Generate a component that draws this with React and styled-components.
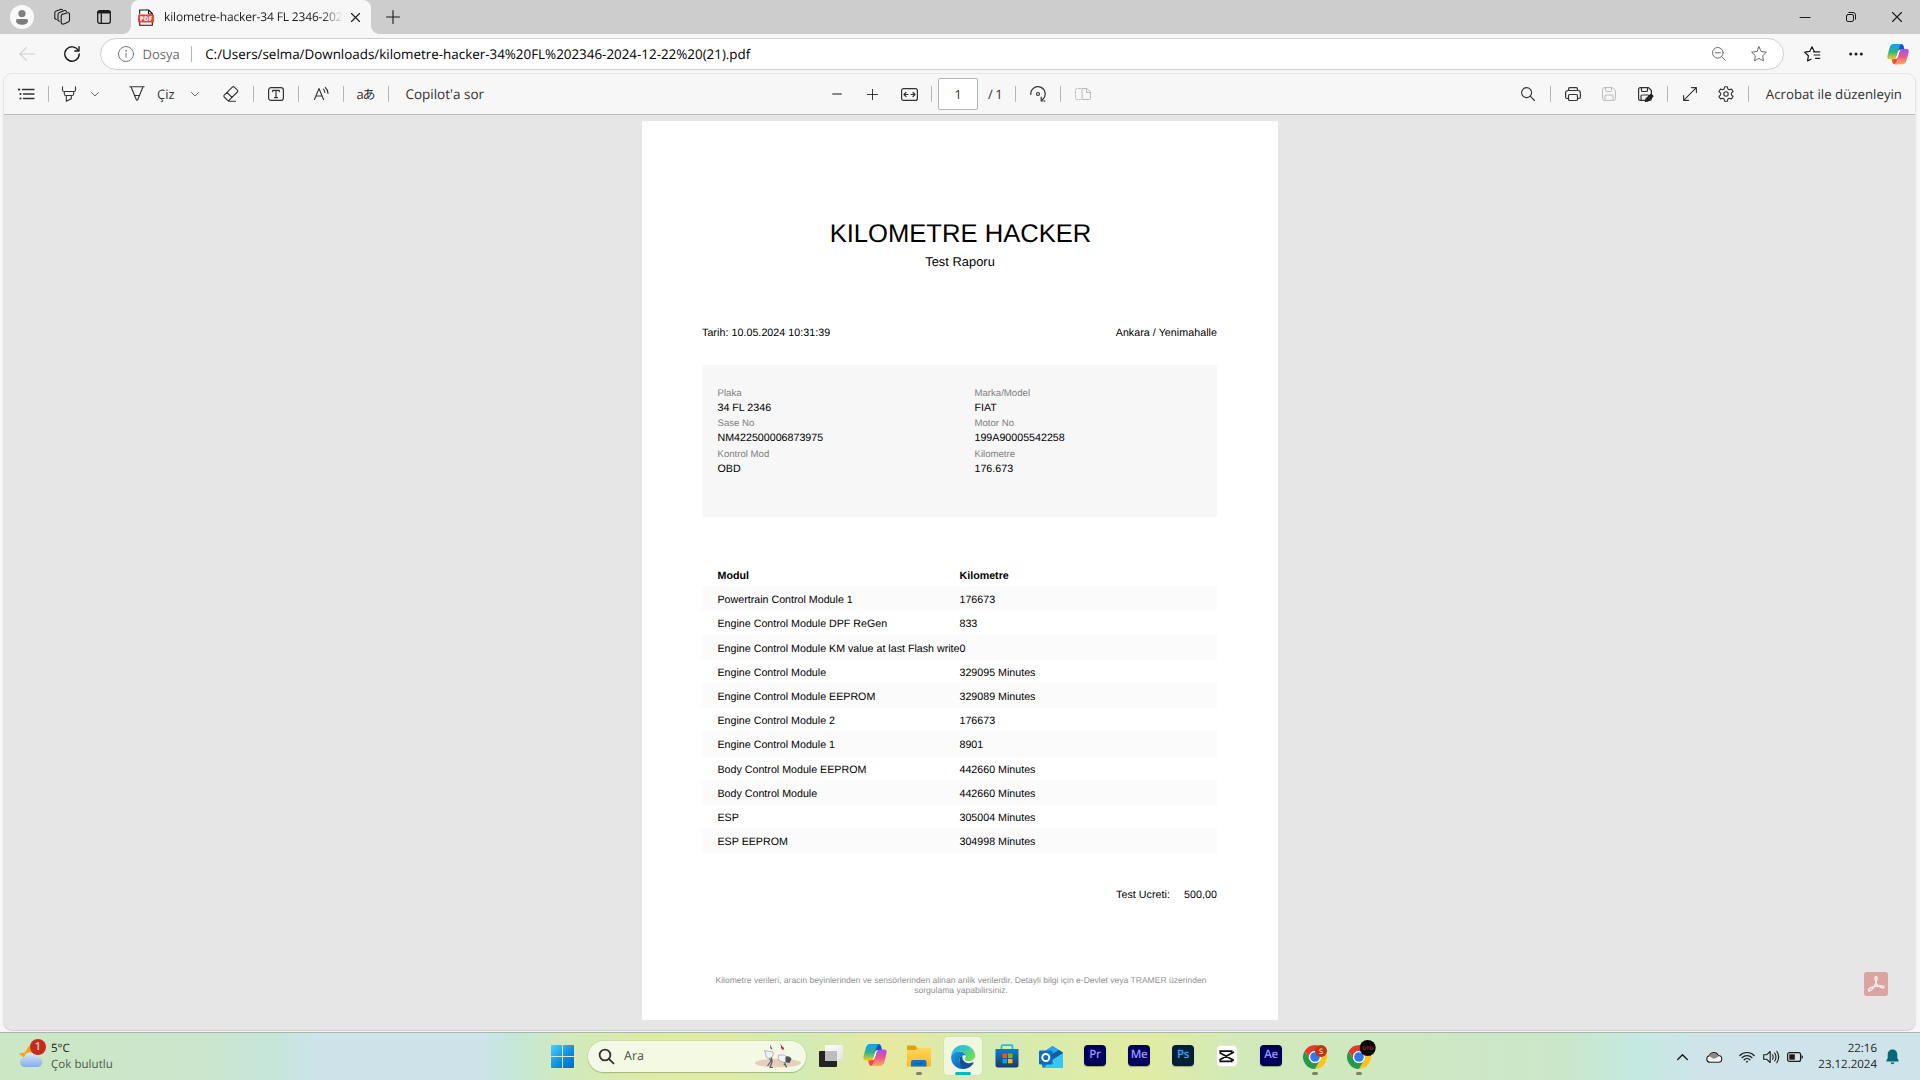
import React from "react";
import styled, { createGlobalStyle } from "styled-components";

const ui = `"Open Sans", "Noto Sans", "Noto Sans CJK JP", sans-serif`;

const Global = createGlobalStyle`
  * { box-sizing: border-box; }
  html, body { margin: 0; padding: 0; }
  body { width: 1920px; height: 1080px; overflow: hidden; font-family: ${ui}; background: #f7f7f7; color: #1b1b1b; text-rendering: geometricPrecision; }
  svg { display: block; flex: none; overflow: visible; }
`;

const Screen = styled.div`display: flex; flex-direction: column; width: 1920px; height: 1080px; background: #f7f7f7;`;

const Label = styled.span`
  white-space: nowrap; flex: none;
  font-size: ${p => p.$size || 13}px;
  line-height: ${p => p.$lh || 18}px;
  letter-spacing: ${p => p.$ls || 0}px;
  color: ${p => p.$color || "#1b1b1b"};
  margin-left: ${p => p.$ml || 0}px;
`;

/* ---------- tab strip ---------- */
const TabStrip = styled.div`height: 34px; background: #cdcdcd; display: flex; align-items: center;`;
const Avatar = styled.div`width: 24px; height: 24px; margin-left: 10px; border-radius: 50%; background: #f9f9f9; display: flex; align-items: center; justify-content: center;`;
const StripIcon = styled.div`margin-left: ${p => p.$ml}px; flex: none;`;
const Tab = styled.div`
  position: relative; margin-left: 20px; width: 240px; height: 34px; padding-left: 7px;
  display: flex; align-items: center; background: #f7f7f7; border-radius: 8px 8px 0 0;
  &::before, &::after { content: ""; position: absolute; bottom: 0; width: 8px; height: 8px; }
  &::before { left: -8px; background: radial-gradient(circle at 0 0, transparent 7.5px, #f7f7f7 8px); }
  &::after { right: -8px; background: radial-gradient(circle at 100% 0, transparent 7.5px, #f7f7f7 8px); }
`;
const TabTitle = styled.div`
  width: 179px; margin-left: 10px; overflow: hidden; white-space: nowrap; font-size: 12px; line-height: 18px; color: #1b1b1b;
  letter-spacing: -0.15px;
  mask-image: linear-gradient(90deg, #000 158px, transparent 179px);
`;
const WindowButtons = styled.div`margin-left: auto; display: flex; align-items: center; gap: 36px; padding-right: 18px;`;

/* ---------- address row ---------- */
const NavRow = styled.div`height: 39px; display: flex; align-items: center; padding: 1px 11px 0 19px;`;
const AddressBox = styled.div`
  flex: none; width: 1684px; height: 32px; margin-left: 20px; padding: 0 16px 0 17px; border: 1px solid #cfcfcf; border-radius: 16px; background: #fff;
  display: flex; align-items: center;
`;
const BoxIcons = styled.div`margin-left: auto; display: flex; align-items: center; gap: 25px;`;
const NavIcons = styled.div`flex: 1; display: flex; align-items: center; justify-content: space-between; padding-left: 20px;`;
const Sep = styled.div`flex: none; width: 1px; height: 16px; background: #b5b5b5; margin: 0 ${p => (p.$mr === undefined ? 14 : p.$mr)}px 0 ${p => (p.$mlx === undefined ? 14 : p.$mlx)}px;`;

/* ---------- viewer ---------- */
const Viewer = styled.div`
  flex: none; height: 957px; width: 1913px; margin-left: 3px; border: 1px solid #e6e6e6; border-radius: 9px; overflow: hidden;
  background: #e6e6e6; box-shadow: 0 1px 1px #cfcfcf; display: flex; flex-direction: column;
`;
const Toolbar = styled.div`flex: none; height: 41px; background: #f7f7f7; border-bottom: 1px solid #bdbdbd; display: flex; align-items: center;`;
const ToolsLeft = styled.div`width: 825px; padding-left: 14px; display: flex; align-items: center;`;
const ToolsCenter = styled.div`flex: 1; display: flex; align-items: center;`;
const ToolsRight = styled.div`display: flex; align-items: center; padding-right: 13px;`;
const Tool = styled.div`flex: none; margin-left: ${p => p.$ml || 0}px;`;
const PageInput = styled.div`width: 40px; height: 32px; border: 1px solid #b4b4b4; border-radius: 2px; background: #fff; display: flex; align-items: center; justify-content: center; font-size: 12.5px; color: #333;`;
const Canvas = styled.div`position: relative; flex: 1; display: flex; justify-content: center; padding: 6px 0 0 1px;`;
const AcrobatBadge = styled.div`position: absolute; right: 27px; bottom: 33px; width: 24px; height: 24px; border-radius: 3px; background: #d9a4a1;`;

/* ---------- pdf page ---------- */
const Page = styled.div`
  width: 636px; height: 899px; background: #fff; color: #000; padding: 98px 61px 0 60px; font-family: "Liberation Sans", Arial, sans-serif;
  display: flex; flex-direction: column; font-size: 10.68px;
`;
const Title = styled.div`text-align: center; font-size: 25.6px; line-height: 30px; white-space: nowrap; padding-left: 2px;`;
const Subtitle = styled.div`text-align: center; font-size: 12.82px; line-height: 16px; margin-top: 5px; padding-left: 1px; letter-spacing: 0.05px;`;
const MetaRow = styled.div`margin-top: 55px; display: flex; justify-content: space-between; line-height: 16px; letter-spacing: 0.05px;`;
const InfoBox = styled.div`
  margin-top: 24px; height: 152px; background: #f7f7f7; padding: 21px 0 0 15.5px;
  display: grid; grid-template-columns: 257px 1fr; grid-template-rows: 30px 31px 30px;
`;
const FieldName = styled.div`font-size: 9.62px; line-height: 15px; color: #808080;`;
const FieldValue = styled.div`line-height: 15px;`;
const Table = styled.div`margin-top: 44px; display: flex; flex-direction: column;`;
const Row = styled.div`
  height: ${p => p.$h || 24}px; padding: ${p => (p.$head ? 7 : 6)}px 0 0 15.5px; display: grid; grid-template-columns: 242px 1fr; line-height: 16px; white-space: nowrap;
  font-weight: ${p => (p.$head ? 700 : 400)};
  background: ${p => (p.$striped ? "#fbfbfb" : "transparent")};
  box-shadow: ${p => (p.$striped ? "0 1px 0 #fcfcfc" : "none")};
`;
const Fee = styled.div`margin-top: 35px; line-height: 16px; display: flex; justify-content: flex-end; gap: 14px; letter-spacing: 0.05px;`;
const Footnote = styled.div`margin-top: 72px; font-size: 8.55px; line-height: 10px; color: #8f8f8f; text-align: center; padding-left: 3px;`;

/* ---------- taskbar ---------- */
const Taskbar = styled.div`
  height: 48px; margin-top: auto; border-top: 1px solid #a9b5ad; display: flex; align-items: center; position: relative;
  background: linear-gradient(90deg, #cbe7c3 0, #cbe6cd 200px, #c6e6dc 280px, #cde3e9 320px, #cde3e9 480px, #c5e7dc 510px, #d0e9be 560px, #deeba6 650px, #e0eca4 720px, #d3ebb4 800px, #e7e9a0 890px, #d5ebb2 985px, #e1eca2 1140px, #d2e9b9 1240px, #cfe8c2 1400px, #cbe7ca 1560px, #c4e9e2 1640px, #cfe3e9 1700px, #cfe3ea 1920px);
`;
const Weather = styled.div`width: 588px; padding-left: 19px; display: flex; align-items: center; gap: 8px;`;
const WeatherIcon = styled.div`position: relative; width: 24px; height: 30px;`;
const CountBadge = styled.div`position: absolute; left: 11px; top: -3px; width: 16px; height: 16px; border-radius: 50%; background: #c42b1c; color: #fff; font-size: 11px; line-height: 16px; text-align: center;`;
const Lines = styled.div`display: flex; flex-direction: column; align-items: ${p => p.$align || "flex-start"};`;
const StartButton = styled.div`margin-left: -37px; margin-right: 14px;`;
const SearchPill = styled.div`width: 218px; height: 31px; margin-bottom: 1px; border-radius: 16px; background: rgba(250,252,245,.78); box-shadow: 0 1px 1px rgba(90,110,60,.35), 0 0 0 1px rgba(120,140,90,.12); display: flex; align-items: center; padding: 0 4px 0 11px;`;
const Apps = styled.div`display: flex; margin-left: 3px;`;
const AppSlot = styled.div`
  position: relative; width: 44px; height: 47px; padding-bottom: ${p => (p.$lift ? 2 : 0)}px; display: flex; align-items: center; justify-content: center;
  &::before { content: ""; position: absolute; left: 3px; top: 4px; width: 38px; height: 38px; border-radius: 4px; background: ${p => (p.$active ? "rgba(255,255,255,.6)" : "transparent")}; box-shadow: ${p => (p.$active ? "0 0 1px rgba(0,0,0,.25)" : "none")}; }
  &::after { content: ""; position: absolute; bottom: 5px; width: ${p => (p.$active ? 16 : 6)}px; height: 3px; border-radius: 2px; background: ${p => (p.$active ? "#00b7c7" : p.$open ? "#7c8467" : "transparent")}; }
  svg { position: relative; }
`;
const AdobeTile = styled.div`
  width: 22px; height: 21px; border-radius: 4px; background: ${p => p.$bg}; color: ${p => p.$fg}; font-size: 11.5px; font-weight: 600; line-height: 20px; text-align: center; letter-spacing: -0.3px; box-shadow: 0 1px 1px rgba(0,0,0,.3);
`;
const Tray = styled.div`margin-left: auto; display: flex; align-items: center; padding-right: 21px;`;

const Stroke = ({ w = 16, h = 16, vb, c = "#1b1b1b", sw = 1, children }) => (
  <svg width={w} height={h} viewBox={vb || `0 0 ${w} ${h}`} fill="none" stroke={c} strokeWidth={sw} strokeLinecap="round" strokeLinejoin="round">{children}</svg>
);

const PersonIcon = () => <svg width="12" height="15" viewBox="0 0 12 15" fill="#7d7d7d"><circle cx="6" cy="3.6" r="3.6" /><path d="M1.500 9h9Q12 9 12 10.500C12 13.500 9 14.800 6 14.800S0 13.500 0 10.500Q0 9 1.500 9Z" /></svg>;
const WorkspacesIcon = () => <Stroke sw={1.1}><path d="M8 5.500 13.500 3.800Q15.500 3.500 15.500 5v6q0 1.500-1.300 2l-3.700 1.700Q8 15.800 7.200 14V7Q7.200 5.800 8.500 5.300Z" /><path d="M5.300 12.300 4 11.600V5.400Q4 4 5.500 3.400L10 1.700q1.500-.5 2.500.6" /><path d="M2.300 10.500.8 9.500V3.700Q.8 2.500 2.200 1.900L6.500.4q1.300-.4 2.200.6" /></Stroke>;
const VerticalTabsIcon = () => <Stroke w={14} h={14} sw={1.3}><rect x=".7" y=".7" width="12.600" height="12.600" rx="2" /><path d="M4.300 4v9" /><path d="M1.500 2.200h11" strokeWidth="2.600" /></Stroke>;
const PdfIcon = () => (
  <svg width="16" height="17" viewBox="0 0 16 17"><path d="M1.700 5V1h9l3.600 3.600V16.300H1.700V13" fill="#fff" stroke="#111" strokeWidth="1.100" /><path d="M10.500 1v4h4" fill="none" stroke="#111" strokeWidth="1" /><rect x="0" y="5.500" width="16" height="8" rx="1" fill="#fb3a37" /><text x="8" y="11.900" textAnchor="middle" fontSize="6.500" fontWeight="800" fill="#fff" fontFamily="Open Sans">PDF</text></svg>
);
const Cross = ({ s = 9, sw = 1.1 }) => <Stroke w={s} h={s} sw={sw}><path d={`M.5 .5 ${s - .5} ${s - .5}M${s - .5} .5 .5 ${s - .5}`} /></Stroke>;
const Plus = ({ s = 14, ...r }) => <Stroke w={s} h={s} vb="0 0 14 14" sw={1.1} {...r}><path d="M7 .5v13M.5 7h13" /></Stroke>;
const BackIcon = () => <Stroke w={16} h={14} c="#cfcfcf" sw={1.1}><path d="M15.500 7H1M7.300.700 1 7l6.300 6.300" /></Stroke>;
const ReloadIcon = () => <Stroke sw={1.4}><path d="M14.300 4.500A7.200 7.200 0 1 0 15.200 8" /><path d="M15 .800V5h-4.200" /></Stroke>;
const InfoIcon = () => <Stroke c="#767676"><circle cx="8" cy="8" r="7.500" /><path d="M8 7.300v4" /><circle cx="8" cy="4.800" r=".4" fill="#767676" /></Stroke>;
const ZoomOutIcon = () => <Stroke w={14} h={14} c="#6a6a6a"><circle cx="5.800" cy="5.800" r="5.300" /><path d="M9.700 9.700 13.500 13.500M3.300 5.800h5" /></Stroke>;
const StarIcon = () => <Stroke c="#6a6a6a"><path d="M8 .8l2.200 4.700 5.200.700-3.800 3.600.900 5.100L8 12.400 3.500 14.900l.900-5.100L.600 6.200l5.200-.700Z" /></Stroke>;
const FavoritesIcon = () => <Stroke sw={1.2}><path d="M10.300 5.400 8 .800 5.700 5.400l-5 .8 3.700 3.600-.9 5.100L7 13.200" /><path d="M9.500 5.800h6.300M10 9h5.800M11.500 12.300h4.300" /></Stroke>;
const DotsIcon = () => <svg width="14" height="4" viewBox="0 0 14 4" fill="#1b1b1b"><circle cx="1.700" cy="2" r="1.500" /><circle cx="7" cy="2" r="1.500" /><circle cx="12.300" cy="2" r="1.500" /></svg>;
const CopilotIcon = ({ s = 22, id }) => (
  <svg width={s} height={s * .92} viewBox="0 0 24 22">
    <defs>
      <linearGradient id={id + "a"} x1="0" y1="0" x2="0" y2="1"><stop offset="0" stopColor="#1d9bf5" /><stop offset=".5" stopColor="#2bb38b" /><stop offset="1" stopColor="#f0cf22" /></linearGradient>
      <linearGradient id={id + "b"} x1="0" y1="0" x2="0" y2="1"><stop offset="0" stopColor="#a64df0" /><stop offset=".5" stopColor="#ee5590" /><stop offset="1" stopColor="#ffab5c" /></linearGradient>
    </defs>
    <path d="M12 0h3.500q2 0 2.600 2.200L19 6h-3.500q-3 0-3.800 2.500Z" fill="#1550c8" />
    <path d="M12 22H8.500q-2 0-2.600-2.200L5 16h3.500q3 0 3.800-2.500Z" fill="#ef5036" />
    <path d="M7 0h9.200q-1.800.5-2.500 3L10.500 13.500Q9.600 16.500 6.800 16.500H3q-3.500 0-2.500-4L2.800 4Q3.900 0 7 0Z" fill={`url(#${id}a)`} />
    <path d="M17 22H7.800q1.800-.5 2.500-3L13.500 8.500q.900-3 3.700-3H21q3.500 0 2.500 4L21.200 18q-1.100 4-4.200 4Z" fill={`url(#${id}b)`} />
    <path d="M12.200 8.500q.6-2.200 2.600-2.800-1 1-1.400 2.600L11.800 13.500q-.6 2.200-2.600 2.700 1-1 1.400-2.500Z" fill="#fff" opacity=".85" />
  </svg>
);

const ListIcon = () => <Stroke w={16} h={12} c="#333" sw={1.3}><path d="M4.500 1.500H16M5.500 6H16M5.500 10.500H16" /><path d="M.8 1.500h.6M2.300 6h.3M2.300 10.500h.3" strokeWidth="1.800" /></Stroke>;
const HighlighterIcon = () => <Stroke c="#333" sw={1.1}><path d="M1.500.800V4q0 1.500 1.500 1.500h10q1.500 0 1.500-1.500V.800M3.300 5.500V8q0 1.500 1.500 1.500h6.400q1.500 0 1.500-1.500V5.500M5.300 9.500v5.700l5-2.500V9.500" /></Stroke>;
const ChevronDown = () => <Stroke w={8} h={5} c="#666"><path d="M.5.500 4 4 7.500.500" /></Stroke>;
const PenIcon = () => <Stroke c="#333" sw={1.1}><path d="M.8.800h14.400M2 .800 7 13q1 2.500 2 0L14 .800M5.300 9.500h5.400" /></Stroke>;
const EraserIcon = () => <Stroke c="#333" sw={1.1}><path d="M9.300 1.100 1.200 9.200q-.9.900 0 1.800l3.200 3.200q.9.900 1.800 0l8.200-8.200q.9-.9 0-1.800l-3.200-3.100q-.900-.9-1.900 0ZM4 6.400l5.100 5.100M5.500 15.200h7" /></Stroke>;
const TextBoxIcon = () => <Stroke h={14} c="#333" sw={1.2}><rect x=".6" y=".6" width="14.800" height="12.800" rx="2.500" /><path d="M4.700 4.700V3.300h6.600v1.400M8 3.300v7.400M6.500 10.700h3" /></Stroke>;
const ReadAloudIcon = () => <Stroke c="#333" sw={1.1}><path d="M1.500 13.500 6 2.500l4.500 11M3 10h6M10.300 3.200q1.500 1.300 1.500 3.300M12.300 1.500q2.700 2.200 2.700 6" /></Stroke>;
const MinusIcon = () => <Stroke w={10} h={2} c="#868686" sw={2}><path d="M1 1h8" /></Stroke>;
const FitIcon = () => <Stroke h={13} w={17} c="#333" sw={1.2}><rect x=".6" y=".6" width="15.800" height="11.800" rx="2" /><path d="M3 6.500h4M10 6.500h4M5 4.500l-2 2 2 2M12 4.500l2 2-2 2" /></Stroke>;
const RotateIcon = () => <Stroke w={16} h={16} c="#333" sw={1.2}><path d="M.8 8.500a7.200 7.200 0 1 1 11.500 5.200" /><path d="M15 15h-3.800v-4" /><circle cx="8" cy="8" r="1.500" /></Stroke>;
const PageViewIcon = () => <Stroke w={16} h={12} c="#b9b9b9"><path d="M7.500.500h4.500l3.500 3.500v6.500q0 1-1 1H7.500ZM11.500.500v4h4" /><path d="M5.500.500H2Q.5.500.5 2v8q0 1.500 1.500 1.500h3.500" strokeDasharray="2 1.600" /></Stroke>;
const SearchIcon = ({ s = 14, c = "#333", sw = 1.1 }) => <Stroke w={s} h={s} vb="0 0 14 14" c={c} sw={sw}><circle cx="5.600" cy="5.600" r="5" /><path d="M9.200 9.200 13.500 13.500" /></Stroke>;
const PrinterIcon = () => <Stroke h={14} c="#333" sw={1.2}><path d="M3.500 3.500V2q0-1.400 1.400-1.400h6.200Q12.500.6 12.500 2v1.500M3.500 11.500H2Q.6 11.500.6 10V6q0-2.500 2.500-2.500h9.800Q15.400 3.500 15.400 6v4q0 1.500-1.400 1.500h-1.500" /><rect x="3.500" y="7.500" width="9" height="6" rx="1.200" /></Stroke>;
const SavePath = "M2.500.6H10.500L13.400 3.500V11.500Q13.400 13.400 11.500 13.400H2.500Q.6 13.400.6 11.500V2.500Q.6.6 2.500.6ZM3.500.6V3.500Q3.500 4.500 4.500 4.500H8.500Q9.500 4.500 9.500 3.500V.6M3 13.400V9Q3 8 4 8H10Q11 8 11 9V13.400";
const SaveIcon = () => <Stroke w={14} h={14} c="#b9b9b9"><path d={SavePath} /></Stroke>;
const SaveAsIcon = () => <Stroke w={16} h={15} c="#333" sw={1.2}><path d={SavePath} /><path d="M7.500 14.500l.6-2.800L13 7.200l2 2-4.800 4.700Z" fill="#222" stroke="#222" strokeWidth="1.200" /></Stroke>;
const ExpandIcon = () => <Stroke w={14} h={14} c="#333" sw={1.1}><path d="M.6 13.400 13.400.6M8.500.6h4.900v4.900M.6 8.500v4.900h4.900" /></Stroke>;
const GearIcon = () => <Stroke w={16} h={16} c="#333" sw={1.1}><circle cx="8" cy="8" r="2.200" /><path d="M6.600.8h2.800l.5 2.300 1.300.7 2.300-.7 1.600 2.400-1.700 1.700v1.600l1.700 1.700-1.600 2.400-2.300-.7-1.300.7-.5 2.300H6.600l-.5-2.300-1.300-.7-2.300.7-1.600-2.400 1.700-1.700V7.200L.9 5.500l1.600-2.400 2.300.7 1.300-.7Z" /></Stroke>;
const AcrobatMark = () => <Stroke w={24} h={24} c="#fdf3f2" sw={1.3}><path d="M12 4.300c1.600 0 1.100 3.900 0 6.700-1.300 3.300-4.300 7.900-6.500 8-1.700 0-1.300-2 1.200-3.300 3.600-1.900 13.200-3 13.300-.5 0 1.800-4.500.4-6.700-2.300C11.300 10.600 10.300 4.300 12 4.300Z" /></Stroke>;

const PartlyCloudy = () => (
  <svg width="24" height="28" viewBox="0 0 24 28"><defs><linearGradient id="cl" x1="0" y1="0" x2="0" y2="1"><stop offset="0" stopColor="#dce9fb" /><stop offset="1" stopColor="#84aceb" /></linearGradient></defs>
    <path d="M10.500 3 12 8l5 0-2 10H6l-1-2-5-4.500 6-1 .5-1Z" fill="#f7a11b" /><path d="M5.500 25a5.300 5 0 0 1-.5-9.800A6.500 6.500 0 0 1 17.500 15 5 5 0 0 1 19 25Z" fill="url(#cl)" /></svg>
);
const WindowsLogo = () => (
  <svg width="23" height="23" viewBox="0 0 23 23"><defs><linearGradient id="wn" gradientUnits="userSpaceOnUse" x1="0" y1="0" x2="23" y2="23"><stop offset="0" stopColor="#4fd0fb" /><stop offset=".55" stopColor="#0f8ee0" /><stop offset="1" stopColor="#0067c5" /></linearGradient></defs>
    <path d="M1 0h10v11H0V1Q0 0 1 0ZM12 0h10q1 0 1 1v10H12ZM0 12h11v11H1q-1 0-1-1ZM12 12h11v10q0 1-1 1H12Z" fill="url(#wn)" /></svg>
);
const Cranes = () => (
  <svg width="46" height="24" viewBox="0 0 46 24"><ellipse cx="23" cy="19" rx="23" ry="4.300" fill="#e8cdb9" />
    <g fill="none" stroke="#555a66" strokeWidth="1.200" strokeLinejoin="round"><path d="M14 13l2 4-3.500 5M16.500 13l.5 5-2 5.500h3M29 17l2.500 6.500M31 17l-2 4" /></g>
    <g fill="none" stroke="#eef0f5" strokeWidth="2.200" strokeLinecap="round"><path d="M16 2.500q2.500 3 .5 7M27 3q3 4 0 9" /></g>
    <path d="M9.500 6.500q4 1 8.500 1.500 1 5-4 6.500-4-1-3-3.500Z" fill="#f1f3f7" stroke="#8a8f9b" strokeWidth=".6" /><path d="M23.500 11q5-1 9 2l2 5q-7 2-11.500-3Z" fill="#f1f3f7" stroke="#8a8f9b" strokeWidth=".6" /><path d="M30.500 13q4-2 6 2l-2 4-4-1Z" fill="#4a4f5c" /><path d="M15 .500l2.500 5-2-1ZM25.500 0l2.800 4-2 .5Z" fill="#474b57" /><circle cx="27.800" cy="4.500" r="1.200" fill="#d3293d" /></svg>
);
const TaskViewIcon = () => (
  <svg width="24" height="22" viewBox="0 0 24 22"><defs><linearGradient id="tv" x1="0" y1="0" x2="1" y2="1"><stop offset="0" stopColor="#fff" /><stop offset="1" stopColor="#e2e2e2" /></linearGradient></defs><rect y="6" width="18" height="16" rx="1" fill="#242424" /><rect x="6" width="18" height="16" rx="1" fill="url(#tv)" /><rect x="6" y="6" width="12" height="10" fill="#bdbdbd" /></svg>
);
const FolderIcon = () => (
  <svg width="24" height="22" viewBox="0 0 24 22"><defs><linearGradient id="fo" x1="0" y1="0" x2="0" y2="1"><stop offset="0" stopColor="#ffd75e" /><stop offset="1" stopColor="#fbb91c" /></linearGradient></defs><path d="M0 1.500Q0 .500 1 .500h7L10.500 3H23q1 0 1 1v5H0Z" fill="#e0a010" /><path d="M0 5h8.500L11 3h12q1 0 1 1v16.500q0 1-1 1H1q-1 0-1-1Z" fill="url(#fo)" /><path d="M4 21.500V17q0-2 2-2h11.500q2 0 2 2v4.500Z" fill="#0e73c9" /><rect x="8" y="18" width="8" height="1.300" fill="#0a5aa8" /></svg>
);
const EdgeIcon = () => (
  <svg width="24" height="24" viewBox="0 0 24 24"><defs>
    <linearGradient id="e1" x1="0" y1="0" x2="1" y2=".6"><stop offset="0" stopColor="#2fb4e8" /><stop offset=".5" stopColor="#31c7c5" /><stop offset="1" stopColor="#6ee04a" /></linearGradient>
    <linearGradient id="e2" x1="0" y1="0" x2="1" y2="1"><stop offset="0" stopColor="#1b9de2" /><stop offset="1" stopColor="#0b5aad" /></linearGradient></defs>
    <path d="M.2 11C.9 4.500 6 0 12 0c7 0 12 5 12 10 0 4-2.700 6.200-6.200 6.200-3 0-4.200-1-4.200-2 0-.8 1-1.200 1-3.200 0-2.500-2.500-4.500-6-4.500C4 6.500 1 9 .2 11Z" fill="url(#e1)" />
    <path d="M.1 11.500C1 8.500 4.500 6.300 8.500 6.500c3.500.2 6 2 6.100 4.300C13 9.500 8.500 11 8.500 15.500c0 4 3.500 7.500 7 8C7 26-.5 19.500.100 11.500Z" fill="url(#e2)" />
    <path d="M8.500 15.500c0-2.500 1.300-4.300 3-5.200-1.200 4.500 2.500 8.200 7 7.900 1.500-.1 2.800-.5 3.500-.9.600-.3.900.2.600.7C21 21 17.500 23.800 14 23.500 10.500 23 8.500 19 8.500 15.500Z" fill="#10509c" /></svg>
);
const StoreIcon = () => (
  <svg width="24" height="24" viewBox="0 0 24 24"><defs><linearGradient id="st" x1="0" y1="0" x2="0" y2="1"><stop offset="0" stopColor="#0f7cc8" /><stop offset="1" stopColor="#173b69" /></linearGradient></defs><path d="M6.500 6V2.500Q6.500 1.200 7.800 1.200h8.400q1.300 0 1.300 1.300V6" fill="none" stroke="#26b8f0" strokeWidth="1.800" /><path d="M.5 5h23v16q0 2.500-2.500 2.500H3Q.5 23.500.5 21Z" fill="url(#st)" /><path d="M7.500 9.500H12V14H7.500Z" fill="#f25022" /><path d="M13 9.500h4.500V14H13Z" fill="#7fba00" /><path d="M7.500 15H12v4.300H7.500Z" fill="#00a4ef" /><path d="M13 15h4.500v4.300H13Z" fill="#ffb900" /></svg>
);
const OutlookIcon = () => (
  <svg width="24" height="22" viewBox="0 0 24 22"><path d="M3 7 13.500 0 24 6.500V20q0 2-2 2H5q-2 0-2-2Z" fill="#1583d8" /><path d="M7 4.500 13.500.500l6 3.500L9 11Z" fill="#28a8ea" /><path d="M12 13 24 7V20q0 2-2 2H5Z" fill="#35c6f4" /><path d="M11 9.500 20 4l4 3-11 7Z" fill="#0f5ba7" /><rect y="4.500" width="13.500" height="14" rx="1.300" fill="#0f6cbd" /><circle cx="6.800" cy="11.500" r="3.500" fill="none" stroke="#fff" strokeWidth="1.900" /></svg>
);
const CapCutIcon = () => <svg width="22" height="22" viewBox="0 0 22 22"><rect x=".8" y=".5" width="20.400" height="21" rx="4" fill="#fff" stroke="#d8ddc8" strokeWidth=".5" /><path d="M18 7 4.200 14.500V16.300h11.500v-2.500M18 15.500 4.200 8V6.200h11.500v2.500" fill="none" stroke="#111" strokeWidth="1.700" /></svg>;
const ChromeIcon = ({ second }) => (
  <svg width="24" height="24" viewBox="0 0 24 24">
    <circle cx="12" cy="12" r="12" fill="#fff" /><path d="M1.600 6A12 12 0 0 1 22.400 6H12a6 6 0 0 0-5.200 9Z" fill="#e33b2e" /><path d="M22.400 6A12 12 0 0 1 12 24l5.200-9A6 6 0 0 0 12 6Z" fill="#fcc31e" /><path d="M12 24A12 12 0 0 1 1.600 6l5.200 9A6 6 0 0 0 17.200 15Z" fill="#27994a" /><circle cx="12" cy="12" r="6" fill="#fff" /><circle cx="12" cy="12" r="4.800" fill="#2f78ee" />
    {second ? <g><circle cx="20.700" cy="3" r="8" fill="#050505" /><text x="20.700" y="4.800" textAnchor="middle" fontSize="5" fontWeight="700" fill="#b3202a" fontFamily="Open Sans">OTO</text></g> : <g><circle cx="18" cy="6" r="6" fill="#bf360c" /><text x="18" y="8.700" textAnchor="middle" fontSize="7.500" fill="#fff" fontFamily="Open Sans">S</text></g>}
  </svg>
);
const ChevronUp = () => <Stroke w={11} h={6} sw={1.4}><path d="M.7 5.500 5.500.700l4.800 4.800" /></Stroke>;
const OneDriveIcon = () => <svg width="16" height="12" viewBox="0 0 16 12"><path d="M4 11.300a3.300 3.300 0 0 1-.7-6.500A4.800 4.800 0 0 1 12.200 4.500a3.400 3.400 0 0 1 .3 6.800Z" fill="#f4f4f4" stroke="#222" strokeWidth="1.100" /><path d="M3.200 5.300a4.600 4.600 0 0 1 8.500-.8L13 5.200 8 8Z" fill="#8b8b8b" /></svg>;
const WifiIcon = () => <Stroke w={16} h={12} sw={1.2}><path d="M.8 4.500a10.200 10.200 0 0 1 14.400 0M3 6.700a7.100 7.100 0 0 1 10 0M5.200 8.800a4 4 0 0 1 5.600 0" /><circle cx="8" cy="10.700" r=".9" fill="#1b1b1b" stroke="none" /></Stroke>;
const SoundIcon = () => <Stroke w={17} h={14} sw={1.1}><path d="M.7 4.800h2.800L7.200 1.500v11L3.500 9.200H.7ZM9.500 4.800q1.300 2.200 0 4.400M11.700 3q2.500 4 0 8M13.800 1.300q3.700 5.700 0 11.400" /></Stroke>;
const BatteryIcon = () => <svg width="16" height="10" viewBox="0 0 16 10"><rect x=".6" y=".6" width="13" height="8.800" rx="2" fill="none" stroke="#1b1b1b" strokeWidth="1.200" /><rect x="2.300" y="2.300" width="5.500" height="5.400" fill="#1b1b1b" /><path d="M14.500 3.300q1.500 0 1.500 1.700t-1.500 1.700Z" fill="#1b1b1b" /></svg>;
const BellIcon = () => <svg width="13" height="16" viewBox="0 0 13 16" fill="#00697a"><path d="M6.500.500C3.500.500 1.700 2.600 1.700 5.500v3.500L.3 11.800q-.2.700.5.700h11.400q.7 0 .5-.7L11.300 9V5.500C11.300 2.600 9.500.500 6.500.500ZM4.500 13.500h4q-.3 1.700-2 1.700t-2-1.700Z" /></svg>;

const fields = [
  ["Plaka", "34 FL 2346"], ["Marka/Model", "FIAT"],
  ["Sase No", "NM422500006873975"], ["Motor No", "199A90005542258"],
  ["Kontrol Mod", "OBD"], ["Kilometre", "176.673"],
];
const modules = [
  ["Powertrain Control Module 1", "176673"],
  ["Engine Control Module DPF ReGen", "833", 25],
  ["Engine Control Module KM value at last Flash write", "0"],
  ["Engine Control Module", "329095 Minutes"],
  ["Engine Control Module EEPROM", "329089 Minutes"],
  ["Engine Control Module 2", "176673"],
  ["Engine Control Module 1", "8901", 25],
  ["Body Control Module EEPROM", "442660 Minutes"],
  ["Body Control Module", "442660 Minutes"],
  ["ESP", "305004 Minutes"],
  ["ESP EEPROM", "304998 Minutes"],
];

export default function App() {
  return (
    <Screen>
      <Global />
      <TabStrip>
        <Avatar><PersonIcon /></Avatar>
        <StripIcon $ml={20}><WorkspacesIcon /></StripIcon>
        <StripIcon $ml={27}><VerticalTabsIcon /></StripIcon>
        <Tab>
          <PdfIcon />
          <TabTitle>kilometre-hacker-34 FL 2346-2024</TabTitle>
          <StripIcon $ml={8}><Cross /></StripIcon>
        </Tab>
        <StripIcon $ml={15}><Plus /></StripIcon>
        <WindowButtons>
          <Stroke w={10} h={1} sw={1}><path d="M0 .5h10" /></Stroke>
          <Stroke w={10} h={10}><rect x=".5" y="2.500" width="7" height="7" rx="1.500" /><path d="M2.800.5H7Q9.500.500 9.500 3v4.200" /></Stroke>
          <Cross s={10} />
        </WindowButtons>
      </TabStrip>

      <NavRow>
        <BackIcon />
        <StripIcon $ml={29}><ReloadIcon /></StripIcon>
        <AddressBox>
          <InfoIcon />
          <Label $ml={8.5} $size={13} $color="#6b6b6b">Dosya</Label>
          <Sep $mlx={11.5} $mr={13} />
          <Label $size={13.4} $color="#000">C:/Users/selma/Downloads/kilometre-hacker-34%20FL%202346-2024-12-22%20(21).pdf</Label>
          <BoxIcons><ZoomOutIcon /><StarIcon /></BoxIcons>
        </AddressBox>
        <NavIcons><FavoritesIcon /><Tool $ml={5}><DotsIcon /></Tool><CopilotIcon id="n" /></NavIcons>
      </NavRow>

      <Viewer>
        <Toolbar>
          <ToolsLeft>
            <ListIcon /><Sep $mr={12} /><HighlighterIcon />
            <Tool $ml={14}><ChevronDown /></Tool>
            <Tool $ml={30}><PenIcon /></Tool>
            <Label $ml={12} $color="#333">Çiz</Label>
            <Tool $ml={16}><ChevronDown /></Tool>
            <Tool $ml={24}><EraserIcon /></Tool>
            <Sep /><TextBoxIcon /><Sep /><ReadAloudIcon /><Sep $mr={13} />
            <Label $size={13} $ls={-1.2} $color="#333">aあ</Label>
            <Sep $mlx={14} $mr={16} />
            <Label $size={13.5} $color="#333">Copilot'a sor</Label>
          </ToolsLeft>
          <ToolsCenter>
            <Tool $ml={3}><MinusIcon /></Tool>
            <Tool $ml={25}><Plus s={11} /></Tool>
            <Tool $ml={23}><FitIcon /></Tool>
            <Sep $mlx={13} $mr={6} />
            <PageInput>1</PageInput>
            <Label $ml={10} $ls={-0.4} $color="#333">/ 1</Label>
            <Sep $mlx={12.5} /><RotateIcon /><Sep /><PageViewIcon />
          </ToolsCenter>
          <ToolsRight>
            <SearchIcon /><Sep $mlx={15} /><PrinterIcon />
            <Tool $ml={21}><SaveIcon /></Tool>
            <Tool $ml={22}><SaveAsIcon /></Tool>
            <Sep $mlx={13} $mr={15} /><ExpandIcon />
            <Tool $ml={21}><GearIcon /></Tool>
            <Sep $mr={17} />
            <Label $size={13.25} $color="#333">Acrobat ile düzenleyin</Label>
          </ToolsRight>
        </Toolbar>
        <Canvas>
          <Page>
            <Title>KILOMETRE HACKER</Title>
            <Subtitle>Test Raporu</Subtitle>
            <MetaRow><span>Tarih: 10.05.2024 10:31:39</span><span>Ankara / Yenimahalle</span></MetaRow>
            <InfoBox>
              {fields.map(([k, v]) => <div key={k}><FieldName>{k}</FieldName><FieldValue>{v}</FieldValue></div>)}
            </InfoBox>
            <Table>
              <Row $head $h={25}><span>Modul</span><span>Kilometre</span></Row>
              {modules.map(([m, k, h], i) => <Row key={m} $h={h} $striped={i % 2 === 0}><span>{m}</span><span>{k}</span></Row>)}
            </Table>
            <Fee><span>Test Ucreti:</span><span>500,00</span></Fee>
            <Footnote>Kilometre verileri, aracin beyinlerinden ve sensörlerinden alinan anlik verilerdir. Detayli bilgi için e-Devlet veya TRAMER üzerinden sorgulama yapabilirsiniz.</Footnote>
          </Page>
          <AcrobatBadge><AcrobatMark /></AcrobatBadge>
        </Canvas>
      </Viewer>

      <Taskbar>
        <Weather>
          <WeatherIcon><PartlyCloudy /><CountBadge>1</CountBadge></WeatherIcon>
          <Lines>
            <Label $size={11.5} $lh={16}>5°C</Label>
            <Label $size={11.5} $lh={16} $ls={0.05} $color="#4c5a4d">Çok bulutlu</Label>
          </Lines>
        </Weather>
        <StartButton><WindowsLogo /></StartButton>
        <SearchPill>
          <SearchIcon s={15} sw={1.7} />
          <Label $ml={10} $size={12.5} $color="#4f5548">Ara</Label>
          <Tool $ml={111}><Cranes /></Tool>
        </SearchPill>
        <Apps>
          <AppSlot $lift><TaskViewIcon /></AppSlot>
          <AppSlot $lift><CopilotIcon s={24} id="t" /></AppSlot>
          <AppSlot $lift $open><FolderIcon /></AppSlot>
          <AppSlot $active><EdgeIcon /></AppSlot>
          <AppSlot $lift><StoreIcon /></AppSlot>
          <AppSlot><OutlookIcon /></AppSlot>
          <AppSlot $lift><AdobeTile $bg="#00005b" $fg="#9999ff">Pr</AdobeTile></AppSlot>
          <AppSlot $lift><AdobeTile $bg="#00005b" $fg="#9999ff">Me</AdobeTile></AppSlot>
          <AppSlot $lift><AdobeTile $bg="#001e36" $fg="#31a8ff">Ps</AdobeTile></AppSlot>
          <AppSlot $lift><CapCutIcon /></AppSlot>
          <AppSlot $lift><AdobeTile $bg="#00005b" $fg="#9999ff">Ae</AdobeTile></AppSlot>
          <AppSlot $open><ChromeIcon /></AppSlot>
          <AppSlot $open><ChromeIcon second /></AppSlot>
        </Apps>
        <Tray>
          <ChevronUp />
          <Tool $ml={18}><OneDriveIcon /></Tool>
          <Tool $ml={17}><WifiIcon /></Tool>
          <Tool $ml={8}><SoundIcon /></Tool>
          <Tool $ml={7}><BatteryIcon /></Tool>
          <Tool $ml={15}>
            <Lines $align="flex-end">
              <Label $size={11.5} $lh={16}>22:16</Label>
              <Label $size={11.5} $lh={16}>23.12.2024</Label>
            </Lines>
          </Tool>
          <Tool $ml={9}><BellIcon /></Tool>
        </Tray>
      </Taskbar>
    </Screen>
  );
}
